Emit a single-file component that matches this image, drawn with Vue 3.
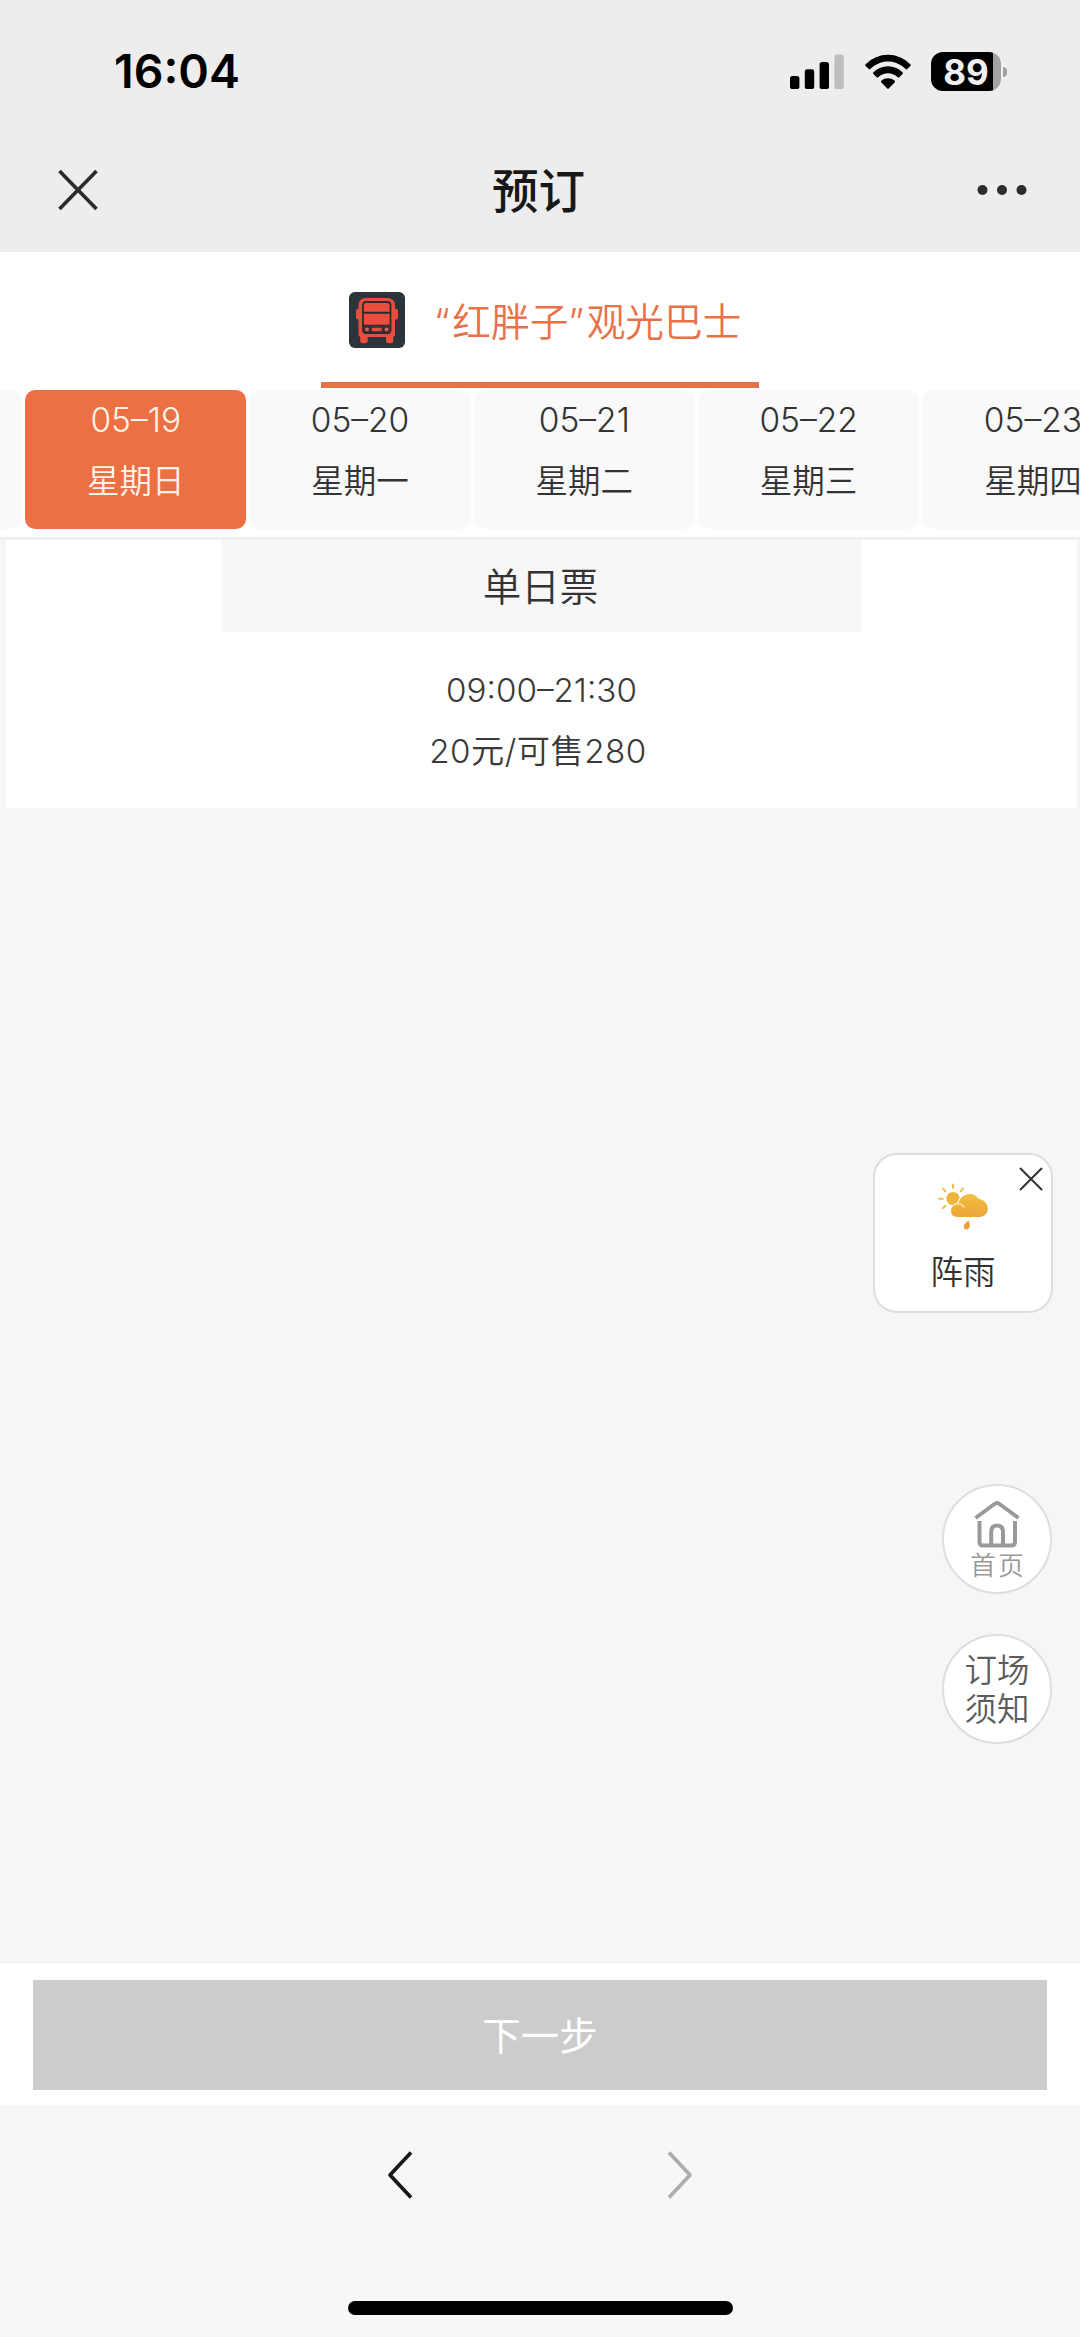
<script setup>
const days = [
  { date: '05–19', week: '星期日', active: true },
  { date: '05–20', week: '星期一' },
  { date: '05–21', week: '星期二' },
  { date: '05–22', week: '星期三' },
  { date: '05–23', week: '星期四' },
]
</script>

<template>
  <div class="page">
    <header class="top">
      <div class="status">
        <span class="clock">16:04</span>
        <div class="indicators">
          <svg class="signal" width="54" height="36" viewBox="0 0 54 36">
            <rect x="0" y="22" width="9.4" height="13" rx="2.6" />
            <rect x="14.8" y="15.3" width="9.4" height="19.7" rx="2.6" />
            <rect x="29.6" y="8" width="9.4" height="27" rx="2.6" />
            <rect x="44.4" y="0.6" width="9.4" height="34.4" rx="2.6" fill="#bdbdbd" />
          </svg>
          <svg class="wifi" width="46" height="36" viewBox="0 0 46 36">
            <path d="M0.4 10.6 C13 -2.7 33 -2.7 45.6 10.6 Q46 11.4 45.4 12 L42.2 15.1 Q41.4 15.7 40.7 15 C30.5 5 15.5 5 5.3 15 Q4.600 15.700 3.800 15.100 L0.600 12 Q0 11.400 0.400 10.600 Z" />
            <path d="M8.200 18.600 C16.500 10.200 29.500 10.200 37.800 18.600 Q38.200 19.300 37.600 19.900 L34.300 23.200 Q33.500 23.800 32.800 23.200 C27 18 19 18 13.200 23.200 Q12.500 23.800 11.700 23.200 L8.400 19.900 Q7.800 19.300 8.200 18.600 Z" />
            <path d="M16.200 26.800 C20 23.500 26 23.500 29.800 26.800 Q30.300 27.500 29.700 28.200 L23.800 34.400 Q23 35.100 22.200 34.400 L16.300 28.200 Q15.700 27.500 16.200 26.800 Z" />
          </svg>
          <div class="battery">
            <div class="cell"><span>89</span></div>
            <i class="nub"></i>
          </div>
        </div>
      </div>
      <nav class="nav">
        <svg width="40" height="42" viewBox="0 0 40 42" class="stroke">
          <path d="M1.500 2 L38.500 40 M38.500 2 L1.500 40" stroke="#2c2c2c" stroke-width="3.700" />
        </svg>
        <h1>预订</h1>
        <svg width="50" height="12" viewBox="0 0 50 12" fill="#2c2c2c">
          <circle cx="5.500" cy="6" r="5" /><circle cx="25" cy="6" r="5" /><circle cx="44.500" cy="6" r="5" />
        </svg>
      </nav>
    </header>

    <div class="tabs">
      <div class="tab">
        <svg width="56" height="56" viewBox="0 0 56 56">
          <rect width="56" height="56" rx="6" fill="#2b343b" />
          <path d="M17 6 H38 Q46 6 46 14 V17 H47.500 Q49 17 49 18.500 V25.500 Q49 27.500 46 27.500 V42 Q46 44.500 44.300 45 V49 Q44.300 51.300 42 51.300 H39.500 Q37 51.300 37 49 V45 H18.700 V49 Q18.700 51.300 16.300 51.300 H13.500 Q11.200 51.300 11.200 49 V45 Q9.500 44.500 9.500 42 V27.500 Q7 27.500 7 25.500 V18.500 Q7 17 9.500 17 V14 Q9.500 6 17 6 Z" fill="#ea4d3d" />
          <rect x="14" y="10" width="27.500" height="31" rx="3" fill="none" stroke="#2b2b31" stroke-width="1.800" />
          <path d="M14 20.700 H41.500 M14 33.700 H41.500" stroke="#2b2b31" stroke-width="2" />
          <rect x="15" y="34.500" width="25.500" height="5.800" fill="#3a2a2e" />
          <circle cx="18" cy="37.400" r="2" fill="#c9685c" /><circle cx="37.500" cy="37.400" r="2" fill="#c9685c" />
          <rect x="22.700" y="35.700" width="10" height="3.500" rx="1" fill="#e0503f" />
        </svg>
        <span class="tab-name"><span class="quote">“</span>红胖子<span class="quote">”</span>观光巴士</span>
      </div>
    </div>

    <div class="days">
      <div class="day sliver"></div>
      <div v-for="d in days" :key="d.date" class="day" :class="{ active: d.active }">
        <span class="num">{{ d.date }}</span>
        <span class="week">{{ d.week }}</span>
      </div>
    </div>

    <main class="body">
      <section class="tickets">
        <div class="ticket-head">单日票</div>
        <div class="slot">
          <span class="time">09:00–21:30</span>
          <span class="price">20元/可售280</span>
        </div>
      </section>

      <aside class="weather">
        <svg class="weather-close stroke" width="24" height="24" viewBox="0 0 24 24">
          <path d="M1 1 L23 23 M23 1 L1 23" stroke="#333" stroke-width="2" />
        </svg>
        <svg class="weather-icon" width="52" height="48" viewBox="0 0 52 48">
          <defs>
            <linearGradient id="amber" x1="0" y1="0" x2="0" y2="1">
              <stop offset="0" stop-color="#f2be45" /><stop offset="1" stop-color="#eda535" />
            </linearGradient>
          </defs>
          <path d="M16 1.500 V5 M5.800 5.600 L8.400 8.300 M26 5.600 L23.600 8.300 M2 15.700 H5.800 M5.800 25.300 L8.400 22.700" stroke="#ecc14f" stroke-width="2" stroke-linecap="round" />
          <circle cx="16" cy="15.500" r="6.600" fill="#efb43e" />
          <path d="M20.500 34.500 C11 34.500 11 22 20.500 20.500 C24 8.500 37 8 42 15.500 C54.500 17 54.500 34.500 42.500 34.500 Z" fill="url(#amber)" stroke="#fff" stroke-width="1.200" />
          <path d="M17 21.700 C21 19.500 25.500 21 27.200 24.500" fill="none" stroke="#fbe5b0" stroke-width="1.400" />
          <path d="M31.500 37.500 C33.500 41 33.500 46.500 29.500 46.500 C25.500 46.500 25.500 41 31.500 37.500 Z" fill="#e9a23b" />
        </svg>
        <span>阵雨</span>
      </aside>

      <div class="shortcuts">
        <div class="round home">
          <svg class="stroke" width="48" height="48" viewBox="0 0 48 48" stroke="#999" stroke-width="4" stroke-linejoin="round">
            <path d="M2.500 18 L21.500 4 Q24 2 26.500 4 L45.500 18" />
            <path d="M6.500 21 V42 Q6.500 45.500 10 45.500 H38 Q42 45.500 42 42 V21" />
            <path d="M18.200 44 V32 Q18.200 25.500 24 25.500 Q30 25.500 30 32 V44" />
          </svg>
          <span>首页</span>
        </div>
        <div class="round notice"><span>订场</span><span>须知</span></div>
      </div>
    </main>

    <footer class="submit"><button>下一步</button></footer>

    <div class="browser">
      <div class="arrows">
        <svg class="stroke" width="26" height="48" viewBox="0 0 26 48"><path d="M24 1.500 L3 24 L24 46.500" stroke="#181818" stroke-width="3.700" stroke-linejoin="round" /></svg>
        <svg class="stroke" width="26" height="48" viewBox="0 0 26 48"><path d="M2 1.500 L23 24 L2 46.500" stroke="#adadad" stroke-width="3.700" stroke-linejoin="round" /></svg>
      </div>
      <div class="home-bar"></div>
    </div>
  </div>
</template>

<style>
body { margin: 0; background: #f6f6f6; }
</style>

<style scoped>
.page {
  width: 1080px;
  height: 2337px;
  display: flex;
  flex-direction: column;
  overflow: hidden;
  background: #f6f6f6;
  color: #333;
  font-family: Inter, "Noto Sans CJK SC", sans-serif;
  font-weight: 350;
}
svg { display: block; flex: none; }
.stroke { fill: none; }
.top { height: 252px; flex: none; background: #ededed; }
.status {
  height: 143px;
  box-sizing: border-box;
  padding: 0 73px 0 114px;
  display: flex;
  align-items: center;
  justify-content: space-between;
}
.clock { font-size: 46.500px; font-weight: 600; line-height: 1; color: #000; }
.indicators { display: flex; align-items: center; }
.wifi { margin-left: 21px; }
.battery { display: flex; align-items: center; margin-left: 20px; }
.cell {
  width: 70px;
  height: 39px;
  border-radius: 12px;
  background: linear-gradient(90deg, #000 62px, #a3a3a3 62px);
  display: flex;
  align-items: center;
}
.cell span { width: 70px; text-align: center; color: #f0f0f0; font: 700 35px/40px Inter, sans-serif; }
.nub { width: 4px; height: 10px; margin-left: 2px; border-radius: 0 4px 4px 0; background: #a3a3a3; }
.nav {
  height: 94px;
  padding: 0 53px 0 58px;
  display: flex;
  align-items: center;
  justify-content: space-between;
}
.nav h1 { margin: 0; padding: 2px 0 0 2px; font-size: 46.500px; font-weight: 500; line-height: 1; color: #181818; }
.tabs { height: 136px; flex: none; display: flex; justify-content: center; background: #fff; }
.tab {
  width: 438px;
  box-sizing: border-box;
  padding: 5px 0 0 28px;
  display: flex;
  align-items: center;
  border-bottom: 6px solid #e87446;
}
.tab-name { margin-left: 29px; padding-top: 4px; font-size: 38.700px; line-height: 56px; color: #e97147; white-space: nowrap; }
.quote { letter-spacing: 2.500px; }
.days {
  height: 152px;
  flex: none;
  box-sizing: border-box;
  padding-top: 2px;
  display: flex;
  gap: 2.800px;
  background: #fff;
  border-bottom: 3px solid #eeefef;
  overflow: hidden;
}
.day {
  flex: 0 0 221.500px;
  height: 139px;
  box-sizing: border-box;
  padding-top: 8px;
  border-radius: 10px;
  background: #f9f9f9;
  display: flex;
  flex-direction: column;
  align-items: center;
}
.day.sliver { flex-basis: 22.200px; border-radius: 0 10px 10px 0; }
.day.active { background: #ed7044; color: #fff4e8; }
.num { font-size: 33.500px; line-height: 44px; }
.week { margin-top: 16px; font-size: 32.500px; line-height: 48px; }
.body { flex: 1; position: relative; }
.tickets {
  height: 268px;
  margin: 0 3px 0 6px;
  background: #fff;
  display: flex;
  flex-direction: column;
  align-items: center;
}
.ticket-head {
  width: 640px;
  height: 92px;
  box-sizing: border-box;
  padding: 3px 2px 0 0;
  background: #f7f7f7;
  font-size: 38.500px;
  line-height: 89px;
  text-align: center;
}
.slot {
  display: flex;
  flex-direction: column;
  align-items: center;
  padding-top: 28px;
  font-size: 33.200px;
  line-height: 61px;
  color: #3a3a3a;
}
.price { padding-right: 7px; letter-spacing: 0.500px; }
.weather {
  position: absolute;
  left: 873px;
  top: 613px;
  width: 180px;
  height: 160px;
  box-sizing: border-box;
  border: 2px solid #dedede;
  border-radius: 24px;
  background: #fff;
  display: flex;
  flex-direction: column;
  align-items: center;
  font-size: 32.500px;
  line-height: 40px;
}
.weather-icon { margin: 28px 0 22px; }
.weather-close { position: absolute; right: 8px; top: 12px; }
.shortcuts {
  position: absolute;
  left: 942px;
  top: 944px;
  display: flex;
  flex-direction: column;
  gap: 40px;
}
.round {
  width: 110px;
  height: 110px;
  box-sizing: border-box;
  border: 2px solid #dedede;
  border-radius: 50%;
  background: #fff;
  display: flex;
  flex-direction: column;
  align-items: center;
}
.home svg { margin-top: 14px; }
.home span { margin: 2px -2px 0 0; font-size: 26px; line-height: 32px; letter-spacing: 2px; color: #999; }
.notice { padding-top: 15px; font-size: 32.500px; line-height: 39px; color: #5c5c5c; }
.submit {
  height: 144px;
  flex: none;
  box-sizing: border-box;
  padding: 17px 33px 0;
  background: #fff;
  border-top: 1px solid #eee;
}
button {
  display: block;
  width: 100%;
  height: 110px;
  border: 0;
  padding: 3px 0 0;
  background: #ccc;
  color: #fff;
  font: 400 38.500px/107px Inter, "Noto Sans CJK SC", sans-serif;
}
.browser {
  height: 231px;
  flex: none;
  box-sizing: border-box;
  border-top: 1px solid #eee;
  background: #f7f7f7;
  display: flex;
  flex-direction: column;
  align-items: center;
  justify-content: space-between;
  padding: 44px 0 22px;
}
.arrows { display: flex; gap: 254px; }
.home-bar { width: 385px; height: 14px; border-radius: 7px; background: #000; }
</style>
